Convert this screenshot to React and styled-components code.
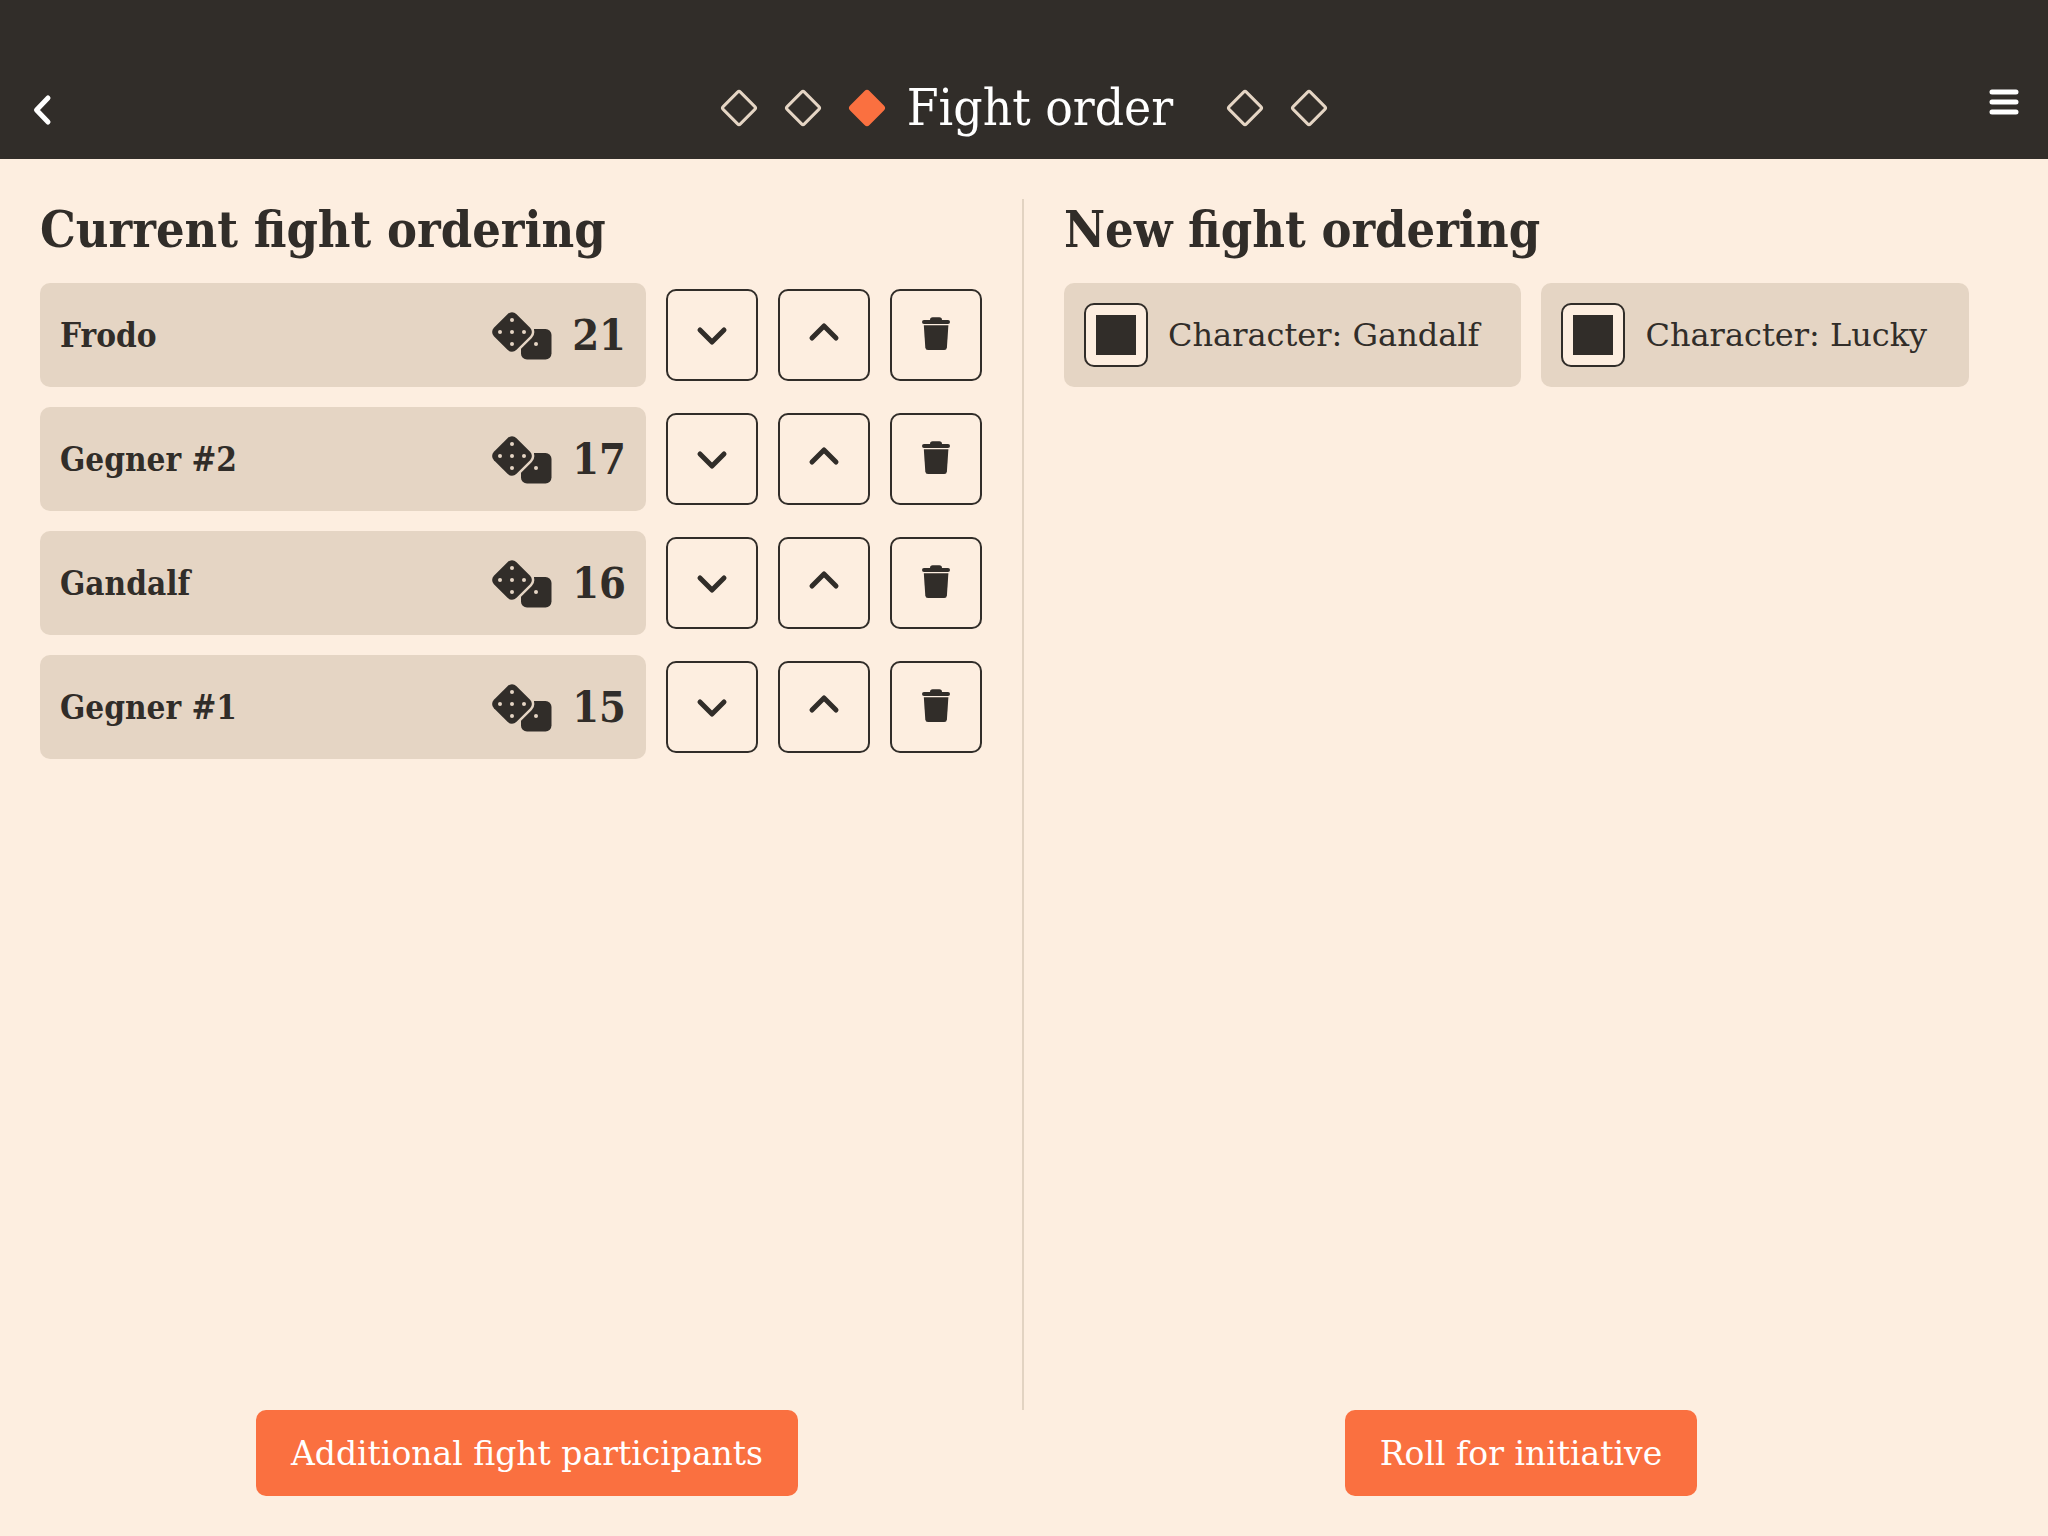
import React, { useState } from "react";
import styled, { createGlobalStyle, ThemeProvider } from "styled-components";

const theme = {
  ink: "#312d29",
  paper: "#fdeee0",
  sand: "#e5d5c4",
  line: "#e2d3c2",
  accent: "#fa7040",
  white: "#ffffff",
  serif: '"DejaVu Serif", serif',
  serifNarrow: '"DejaVu Serif Condensed", "DejaVu Serif", serif',
};

const GlobalStyle = createGlobalStyle`
  *, *::before, *::after { box-sizing: border-box; }
  body {
    margin: 0;
    background: ${theme.paper};
    color: ${theme.ink};
    font-family: ${theme.serif};
    font-size: 32px;
  }
  button, input { font: inherit; color: inherit; }
`;

const Page = styled.div`
  display: flex;
  flex-direction: column;
  min-height: 100vh;
`;

const Header = styled.header`
  display: grid;
  grid-template-columns: 64px 1fr 64px;
  align-items: center;
  height: 159px;
  padding: 56px 16px 0;
  background: ${(p) => p.theme.ink};
  color: ${(p) => p.theme.white};
`;

const HeaderButton = styled.button`
  display: grid;
  place-items: center;
  width: 64px;
  height: 64px;
  padding: 0;
  border: 0;
  background: none;
  cursor: pointer;
`;

const Steps = styled.nav`
  display: flex;
  justify-content: center;
  align-items: center;
`;

const Step = styled.button`
  display: grid;
  place-items: center;
  width: 64px;
  height: 64px;
  padding: 0;
  border: 0;
  background: none;
  color: ${(p) => (p.$active ? p.theme.accent : p.theme.sand)};
`;

const Title = styled.h1`
  margin: 0 40px 0 8px;
  font-family: ${(p) => p.theme.serifNarrow};
  font-size: 51px;
  line-height: 62px;
  font-weight: 400;
  white-space: nowrap;
`;

const Main = styled.main`
  flex: 1;
  display: grid;
  grid-template-columns: 1fr 1fr;
  padding-top: 40px;
`;

const Panel = styled.section`
  min-width: 0;
  padding: 0 40px;
  border-right: ${(p) => (p.$divided ? `2px solid ${p.theme.line}` : "0")};
`;

const PanelTitle = styled.h2`
  margin: 0 0 22px;
  font-family: ${(p) => p.theme.serifNarrow};
  font-size: 50px;
  line-height: 62px;
  font-weight: 700;
`;

const List = styled.ol`
  display: flex;
  flex-direction: column;
  gap: 20px;
  margin: 0;
  padding: 0;
  list-style: none;
`;

const Row = styled.li`
  display: flex;
  align-items: center;
  gap: 20px;
`;

const Card = styled.div`
  flex: 1;
  display: flex;
  align-items: center;
  gap: 20px;
  height: 104px;
  padding: 0 20px;
  border-radius: 10px;
  background: ${(p) => p.theme.sand};
  font-family: ${(p) => p.theme.serifNarrow};
  font-size: 33px;
  font-weight: 700;
`;

const Name = styled.span`
  flex: 1;
`;

const Score = styled.span`
  font-size: 43px;
`;

const ActionButton = styled.button`
  display: grid;
  place-items: center;
  width: 92px;
  height: 92px;
  padding: 0;
  border: 2px solid ${(p) => p.theme.ink};
  border-radius: 10px;
  background: none;
  cursor: pointer;
`;

const Choices = styled.div`
  display: flex;
  flex-wrap: wrap;
  gap: 20px;
`;

const Choice = styled.label`
  display: flex;
  align-items: center;
  gap: 20px;
  height: 104px;
  padding: 0 42px 0 20px;
  border-radius: 10px;
  background: ${(p) => p.theme.sand};
  cursor: pointer;
`;

const Checkbox = styled.input`
  appearance: none;
  display: grid;
  place-items: center;
  width: 64px;
  height: 64px;
  margin: 0;
  border: 2px solid ${(p) => p.theme.ink};
  border-radius: 10px;
  background: ${(p) => p.theme.paper};

  &:checked::before {
    content: "";
    width: 40px;
    height: 40px;
    background: ${(p) => p.theme.ink};
  }
`;

const Footer = styled.footer`
  display: grid;
  grid-template-columns: 1fr 1fr;
  gap: 20px;
  justify-items: center;
  padding: 0 40px 40px;
`;

const PrimaryButton = styled.button`
  height: 86px;
  padding: 0 35px;
  border: 0;
  border-radius: 10px;
  background: ${(p) => p.theme.accent};
  color: ${(p) => p.theme.white};
  font-size: 33px;
  cursor: pointer;
`;

const Stroke = ({ d }) => (
  <svg
    width="40"
    height="40"
    viewBox="0 0 40 40"
    fill="none"
    stroke="currentColor"
    strokeWidth="5"
    strokeLinecap="round"
    strokeLinejoin="round"
    aria-hidden="true"
  >
    <path d={d} />
  </svg>
);

const Diamond = ({ filled }) => (
  <svg width="40" height="40" viewBox="0 0 40 40" aria-hidden="true">
    <rect
      x="7.8"
      y="7.8"
      width="24.4"
      height="24.4"
      rx="2"
      transform="rotate(45 20 20)"
      fill={filled ? "currentColor" : "none"}
      stroke="currentColor"
      strokeWidth="3"
    />
  </svg>
);

const pips = [
  [20, 8],
  [8, 20],
  [20, 20],
  [32, 20],
  [20, 32],
];

const Dice = () => (
  <svg width="60" height="50" viewBox="0 -2 60 50" aria-hidden="true">
    <rect x="29" y="17" width="30.5" height="30.5" rx="6" fill={theme.ink} />
    <rect
      x="4.2"
      y="4.2"
      width="31.6"
      height="31.6"
      rx="6"
      transform="rotate(45 20 20)"
      fill={theme.ink}
      stroke={theme.sand}
      strokeWidth="5"
      paintOrder="stroke"
    />
    {pips.map(([cx, cy]) => (
      <circle key={`${cx}-${cy}`} cx={cx} cy={cy} r="2" fill={theme.sand} />
    ))}
    <circle cx="44" cy="32" r="2" fill={theme.sand} />
  </svg>
);

const Trash = () => (
  <svg width="40" height="40" viewBox="0 0 40 40" fill="currentColor" aria-hidden="true">
    <path d="M14 5q0-2.7 2.7-2.7h6.6Q26 2.3 26 5h6a2 2 0 0 1 0 4H8a2 2 0 0 1 0-4z" />
    <path d="M7.8 10.2h24.6l-1.5 22.3q-.2 2.5-2.6 2.5H12q-2.5 0-2.7-2.5z" />
  </svg>
);

const initialFighters = [
  { name: "Frodo", score: 21 },
  { name: "Gegner #2", score: 17 },
  { name: "Gandalf", score: 16 },
  { name: "Gegner #1", score: 15 },
];

const characters = ["Gandalf", "Lucky"];

export default function App() {
  const [fighters, setFighters] = useState(initialFighters);

  const move = (index, step) => {
    const target = index + step;
    if (target < 0 || target >= fighters.length) return;
    const next = [...fighters];
    [next[index], next[target]] = [next[target], next[index]];
    setFighters(next);
  };

  return (
    <ThemeProvider theme={theme}>
      <GlobalStyle />
      <Page>
        <Header>
          <HeaderButton aria-label="Back">
            <Stroke d="M20 10 L8.5 22 L20 34" />
          </HeaderButton>
          <Steps aria-label="Steps">
            <Step aria-label="Step 1">
              <Diamond />
            </Step>
            <Step aria-label="Step 2">
              <Diamond />
            </Step>
            <Step aria-label="Step 3" aria-current="step" $active>
              <Diamond filled />
            </Step>
            <Title>Fight order</Title>
            <Step aria-label="Step 4">
              <Diamond />
            </Step>
            <Step aria-label="Step 5">
              <Diamond />
            </Step>
          </Steps>
          <HeaderButton aria-label="Menu">
            <Stroke d="M12 4 H36 M12 14 H36 M12 24 H36" />
          </HeaderButton>
        </Header>

        <Main>
          <Panel $divided>
            <PanelTitle>Current fight ordering</PanelTitle>
            <List>
              {fighters.map((fighter, index) => (
                <Row key={fighter.name}>
                  <Card>
                    <Name>{fighter.name}</Name>
                    <Dice />
                    <Score>{fighter.score}</Score>
                  </Card>
                  <ActionButton aria-label="Move down" onClick={() => move(index, 1)}>
                    <Stroke d="M8 15 L20 27 L32 15" />
                  </ActionButton>
                  <ActionButton aria-label="Move up" onClick={() => move(index, -1)}>
                    <Stroke d="M8 23 L20 11 L32 23" />
                  </ActionButton>
                  <ActionButton
                    aria-label="Remove"
                    onClick={() => setFighters(fighters.filter((f) => f !== fighter))}
                  >
                    <Trash />
                  </ActionButton>
                </Row>
              ))}
            </List>
          </Panel>

          <Panel>
            <PanelTitle>New fight ordering</PanelTitle>
            <Choices>
              {characters.map((name) => (
                <Choice key={name}>
                  <Checkbox type="checkbox" defaultChecked />
                  Character: {name}
                </Choice>
              ))}
            </Choices>
          </Panel>
        </Main>

        <Footer>
          <PrimaryButton>Additional fight participants</PrimaryButton>
          <PrimaryButton>Roll for initiative</PrimaryButton>
        </Footer>
      </Page>
    </ThemeProvider>
  );
}
